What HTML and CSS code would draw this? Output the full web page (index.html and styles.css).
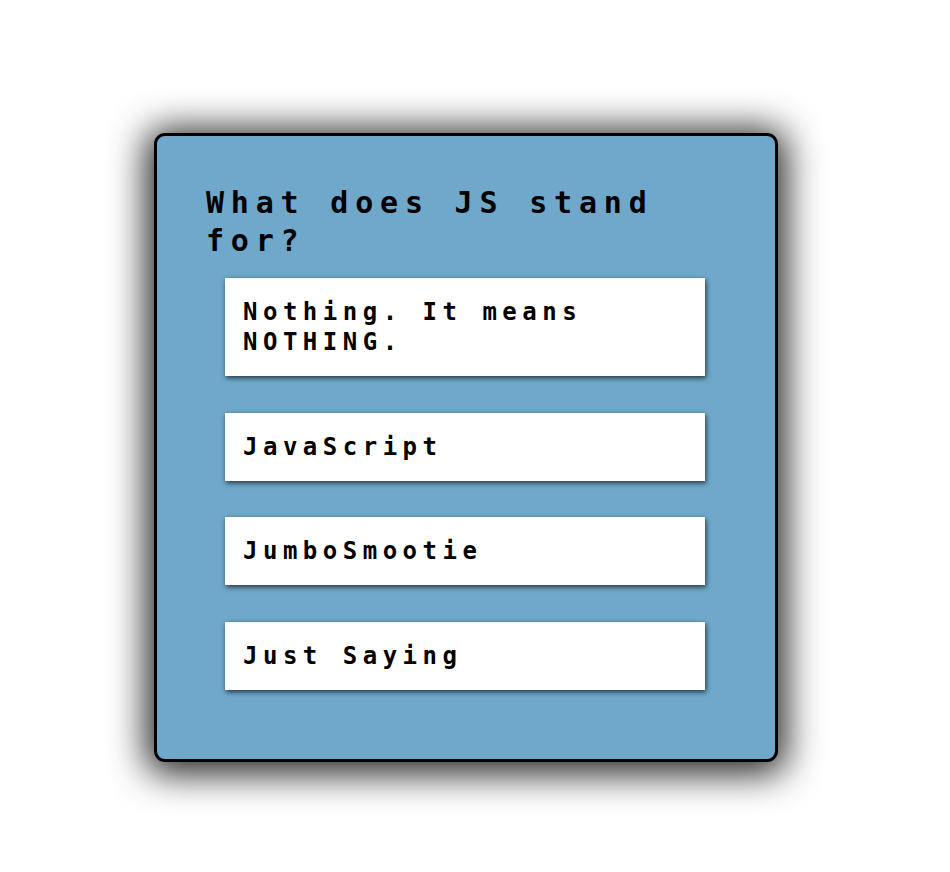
FILE: index.html
```html
<!DOCTYPE html>
<html lang="en">
<head>
<meta charset="utf-8">
<title>Quiz</title>
<link rel="stylesheet" href="styles.css">
</head>
<body>
<main class="page">
  <section class="card">
    <h1 class="question">What does JS stand for?</h1>
    <ul class="answers">
      <li class="answer">Nothing. It means NOTHING.</li>
      <li class="answer">JavaScript</li>
      <li class="answer">JumboSmootie</li>
      <li class="answer">Just Saying</li>
    </ul>
  </section>
</main>
</body>
</html>
```

FILE: styles.css
```css
html, body {
  margin: 0;
  padding: 0;
  background: #ffffff;
}

.page {
  padding: 133px 0 100px 154px;
}

.card {
  box-sizing: border-box;
  width: 624px;
  height: 629px;
  background: #6fa8ca;
  border: 3px solid #000;
  border-radius: 11px;
  box-shadow: 0 4px 36px 8px rgba(0, 0, 0, 0.85);
  padding: 48px 0 0 49px;
  font-family: "DejaVu Sans Mono", "Liberation Mono", monospace;
  font-weight: bold;
  color: #000;
}

.question {
  margin: 0 0 18px 0;
  width: 520px;
  font-size: 30px;
  line-height: 38px;
  letter-spacing: 6.8px;
  font-weight: bold;
}

.answers {
  list-style: none;
  margin: 0;
  padding: 0 0 0 19px;
  display: flex;
  flex-direction: column;
  gap: 36.6px;
}

.answer {
  box-sizing: border-box;
  width: 480px;
  background: #fff;
  padding: 19px 18px;
  font-size: 24px;
  line-height: 30px;
  letter-spacing: 5.5px;
  box-shadow: 1px 2px 5px rgba(0, 0, 0, 0.7);
}
```
